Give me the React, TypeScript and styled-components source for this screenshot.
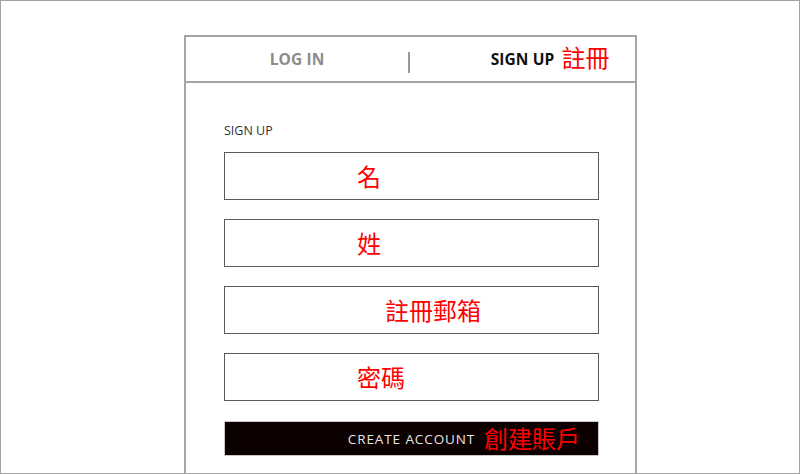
import React from "react";
import styled, { createGlobalStyle } from "styled-components";

const Global = createGlobalStyle`
  html, body { margin: 0; padding: 0; background: #fff; }
  body { font-family: "Open Sans", "Noto Sans", sans-serif; }
  * { box-sizing: border-box; }
`;

const Frame = styled.div`
  width: 800px;
  height: 474px;
  border: 1px solid #a3a3a3;
  display: flex;
  flex-direction: column;
  padding: 34px 0 0 183px;
  overflow: hidden;
`;

const Card = styled.div`
  width: 453px;
  flex: 1;
  border: 2px solid #a6a6a6;
  border-bottom: none;
  display: flex;
  flex-direction: column;
`;

const Tabs = styled.div`
  height: 46px;
  border-bottom: 2px solid #a6a6a6;
  display: grid;
  grid-template-columns: 222px 2px 1fr;
  align-items: center;
`;

const Tab = styled.div<{ $active?: boolean }>`
  position: relative;
  text-align: center;
  font-family: "Open Sans", sans-serif;
  font-weight: 700;
  font-size: 15.5px;
  letter-spacing: 0.1px;
  color: ${(p) => (p.$active ? "#111" : "#8c8c8c")};
  margin-top: -1px;
`;

const Divider = styled.div`
  width: 2px;
  height: 21px;
  margin-top: 7px;
  background: #9a9a9a;
`;

const Note = styled.span`
  font-family: "Noto Sans CJK TC", "Noto Sans CJK SC", sans-serif;
  font-size: 24px;
  font-weight: 400;
  color: #ff0000;
  line-height: 1;
  letter-spacing: 0;
`;

const TabNote = styled(Note)`
  position: absolute;
  left: calc(50% + 39px);
  top: -3px;
`;

const Body = styled.div`
  padding: 39px 36px 0 38px;
  display: flex;
  flex-direction: column;
`;

const Label = styled.div`
  font-family: "Open Sans", sans-serif;
  font-size: 12.5px;
  color: #333;
  line-height: 18px;
  margin-bottom: 12px;
`;

const Field = styled.div<{ $offset: number }>`
  height: 48px;
  border: 1px solid #5a5a5a;
  display: flex;
  align-items: center;
  padding-left: ${(p) => p.$offset}px;
  margin-bottom: 19px;
`;

const Button = styled.div`
  margin-top: 1px;
  height: 35px;
  background: #0d0000;
  border: 1px solid #c8c8c8;
  display: flex;
  align-items: center;
  justify-content: center;
  position: relative;
  font-family: "Open Sans", sans-serif;
  font-size: 13.5px;
  letter-spacing: 0.9px;
  color: #e6e6e6;
`;

const ButtonNote = styled(Note)`
  position: absolute;
  left: 259px;
  top: 4px;
`;

const fields = [
  { text: "名", offset: 132 },
  { text: "姓", offset: 132 },
  { text: "註冊郵箱", offset: 160 },
  { text: "密碼", offset: 132 },
];

export default function App() {
  return (
    <>
      <Global />
      <Frame>
        <Card>
          <Tabs>
            <Tab>LOG IN</Tab>
            <Divider />
            <Tab $active>
              SIGN UP
              <TabNote>註冊</TabNote>
            </Tab>
          </Tabs>
          <Body>
            <Label>SIGN UP</Label>
            {fields.map((f) => (
              <Field key={f.text} $offset={f.offset}>
                <Note>{f.text}</Note>
              </Field>
            ))}
            <Button>
              CREATE ACCOUNT
              <ButtonNote>創建賬戶</ButtonNote>
            </Button>
          </Body>
        </Card>
      </Frame>
    </>
  );
}
